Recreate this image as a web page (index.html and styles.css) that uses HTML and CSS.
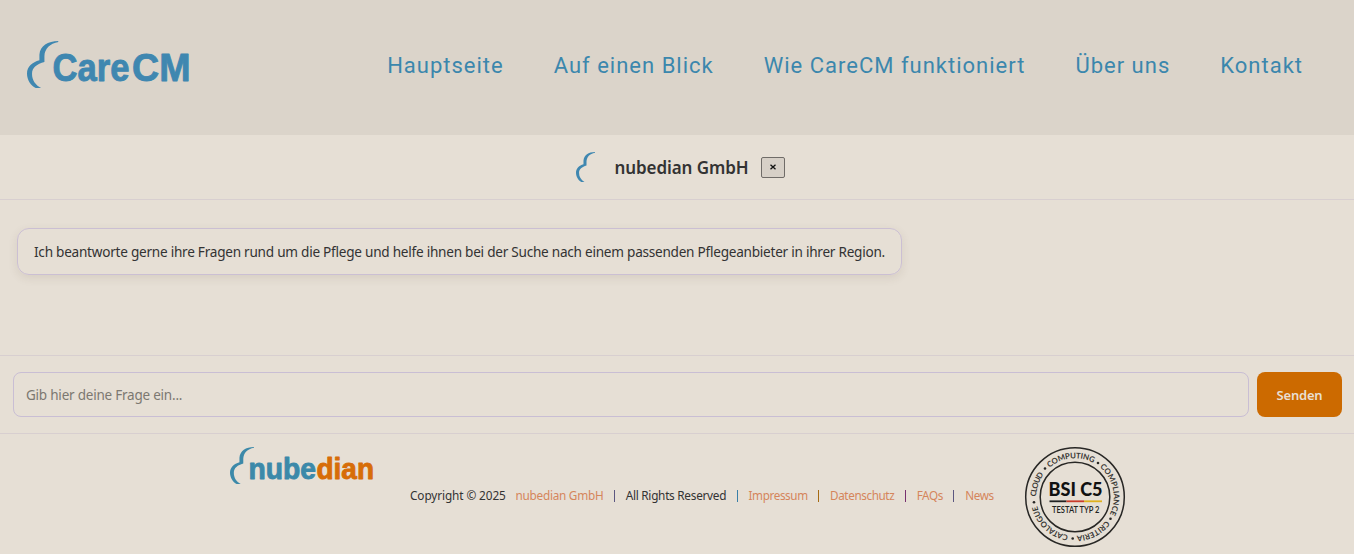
FILE: index.html
```html
<!DOCTYPE html>
<html lang="de">
<head>
<meta charset="utf-8">
<title>CareCM</title>
<link rel="stylesheet" href="styles.css">
</head>
<body>
<svg class="defs" width="0" height="0" aria-hidden="true">
  <symbol id="swoosh" viewBox="36 33 94 141" preserveAspectRatio="none">
    <path d="M130 33C98 33 75 48 73 74L73 91C52 97 36 110 36 131C36 150 48 167 62 174L78 174C61 164 51 151 51 131C51 113 66 102 88 96L88 78C89 56 104 41 130 36Z"/>
  </symbol>
</svg>
<header class="site-header">
  <a class="brand">
    <svg width="166" height="50" viewBox="26 40 166 50">
      <use href="#swoosh" x="27" y="41" width="31.5" height="47"/>
      <text class="logo-text" x="52.500" y="81.300" font-size="38.500" textLength="77" lengthAdjust="spacingAndGlyphs">Care</text>
      <text class="logo-text" x="132" y="81.300" font-size="38.500" textLength="58.500" lengthAdjust="spacingAndGlyphs">CM</text>
    </svg>
  </a>
  <nav class="nav">
    <a>Hauptseite</a><a>Auf einen Blick</a><a>Wie CareCM funktioniert</a><a>Über uns</a><a>Kontakt</a>
  </nav>
</header>
<section class="chat-header">
  <svg class="mini" width="19" height="30"><use href="#swoosh" width="19" height="30"/></svg>
  <h1>nubedian GmbH</h1>
  <button class="close" aria-label="Schließen"><svg width="6" height="6" viewBox="0 0 6 6"><path d="M.5 .7L5.500 5.300M5.500 .7L.5 5.300"/></svg></button>
</section>
<main class="messages">
  <div class="bubble"><span>Ich beantworte gerne ihre Fragen rund um die Pflege und helfe ihnen bei der Suche nach einem passenden Pflegeanbieter in ihrer Region.</span></div>
</main>
<form class="composer">
  <input type="text" placeholder="Gib hier deine Frage ein...">
  <button type="button" class="send">Senden</button>
</form>
<footer class="footer">
  <svg class="footer-logo" width="148" height="40" viewBox="229 446 148 40">
    <use href="#swoosh" x="230" y="447" width="24" height="37"/>
    <text class="logo-text" x="248.500" y="478.500" font-size="29.500" textLength="67.500" lengthAdjust="spacingAndGlyphs">nube</text>
    <text class="logo-text orange" x="316.500" y="478.500" font-size="29.500" textLength="57.500" lengthAdjust="spacingAndGlyphs">dian</text>
  </svg>
  <p class="legal"><span class="copy">Copyright © 2025</span><a class="company">nubedian GmbH</a><i></i><span class="rights">All Rights Reserved</span><i class="blue"></i><a class="link">Impressum</a><i class="amber"></i><a class="link">Datenschutz</a><i class="plum"></i><a class="link">FAQs</a><i></i><a class="link">News</a></p>
  <svg class="badge" width="102" height="102" viewBox="-51 -51 102 102">
    <path id="ring" fill="none" d="M-38.800 0A38.800 38.800 0 0 1 38.800 0A38.800 38.800 0 0 1 -38.800 0"/>
    <circle r="49.300"/><circle r="34.800"/>
    <g class="ring-text">
      <text textLength="24"><textPath href="#ring" startOffset="5.100%">CLOUD</textPath></text>
      <text textLength="47"><textPath href="#ring" startOffset="23.200%">COMPUTING</textPath></text>
      <text textLength="52"><textPath href="#ring" startOffset="46.700%">COMPLIANCE</textPath></text>
      <text textLength="34"><textPath href="#ring" startOffset="67.300%">CRITERIA</textPath></text>
      <text textLength="45"><textPath href="#ring" startOffset="87%">CATALOGUE</textPath></text>
    </g>
    <g class="dots"><circle cx="-30" cy="-28.500" r="1.300"/><circle cx="23" cy="-34" r="1.300"/><circle cx="35.500" cy="21.700" r="1.300"/><circle cx="-2.300" cy="41.500" r="1.300"/><circle cx="-41" cy="5.300" r="1.300"/></g>
    <text class="bsi" x="-26.500" y="-.7" textLength="54" lengthAdjust="spacingAndGlyphs">BSI C5</text>
    <path class="black" d="M-25.500 4.300h17"/><path class="red" d="M-8.500 4.300h17.500"/><path class="gold" d="M9 4.300h18"/>
    <text class="testat" x="-23" y="16" textLength="47.500" lengthAdjust="spacingAndGlyphs">TESTAT TYP 2</text>
  </svg>
</footer>
</body>
</html>
```
FILE: styles.css
```css
* { box-sizing: border-box; }
body { margin: 0; height: 554px; overflow: hidden; display: flex; flex-direction: column; background: #e6dfd5; color: #333; font-family: "Noto Sans", sans-serif; }
.defs { position: absolute; }
.site-header { height: 135px; flex: none; display: flex; justify-content: space-between; align-items: flex-start; background: #dbd4ca; padding: 40px 51px 0 26px; }
.brand svg, .footer-logo, .badge { display: block; flex: none; }
svg use { fill: #3f87b0; }
.logo-text { font-family: "Liberation Sans", Arial, sans-serif; font-weight: 700; fill: #3f87b0; stroke: #3f87b0; stroke-width: .9; stroke-linejoin: round; }
.nav { display: flex; gap: 50px; padding-top: 11px; font: 22px/30px Roboto, sans-serif; letter-spacing: 1px; color: #3b87ad; white-space: nowrap; }
.chat-header { height: 65px; flex: none; display: flex; align-items: center; padding-left: 576px; border-bottom: 1px solid #d8cfd0; }
.chat-header h1 { margin: 2px 0 0 19.500px; width: 146.500px; font-size: 17px; line-height: 24px; font-weight: 600; letter-spacing: -.08px; white-space: nowrap; }
.close { width: 24px; height: 21px; padding: 0; border: 1px solid #706c68; border-radius: 2px; background: #d7d0c7; display: flex; align-items: center; justify-content: center; }
.close path { stroke: #111; stroke-width: 1.3; }
.messages { height: 155px; flex: none; padding: 28px 17px; }
.bubble { width: 885px; height: 47px; border: 1px solid #cbbfd3; border-radius: 12px; padding: 0 16px; font-size: 13.600px; line-height: 46px; white-space: nowrap; box-shadow: 0 3px 10px rgba(80,60,40,.1); letter-spacing: -.25px; }
.composer { height: 79px; flex: none; margin: 0; display: flex; gap: 8px; padding: 16px 12px 16px 13px; border-top: 1px solid #d8cfd0; border-bottom: 1px solid #d8cfd0; }
.composer input { flex: 1; height: 45px; padding: 0 12px; border: 1px solid #c9bed4; border-radius: 8px; background: transparent; font: 13.500px "Noto Sans", sans-serif; letter-spacing: -.22px; }
.composer input::placeholder { color: #7c7871; opacity: 1; }
.send { width: 85px; height: 45px; border: 0; border-radius: 8px; padding: 0; background: #cc6a00; color: #e9dfd2; font: 600 13px "Noto Sans", sans-serif; letter-spacing: -.2px; }
.footer { flex: 1; display: flex; align-items: flex-start; padding: 12px 0 0 229px; }
.footer-logo .logo-text, .footer-logo use { fill: #3c89a9; }
.footer-logo .logo-text { stroke: #3c89a9; }
.footer-logo .orange.logo-text { fill: #d76d08; stroke: #d76d08; }
.legal { flex: none; display: flex; align-items: center; width: 588px; margin: 40px 0 0 33px; font-size: 11.800px; line-height: 18px; letter-spacing: -.27px; white-space: nowrap; }
.legal > * { flex: none; }
.legal .copy { width: 96px; letter-spacing: -.1px; }
.legal a { color: #d5855b; }
.legal .company { margin-left: 9.500px; }
.legal .link { font-size: 11.700px; letter-spacing: -.38px; }
.legal i { width: 1px; height: 12px; margin: 1px 11px 0 10.300px; background: #5c5781; }
.legal .blue { background: #397fa8; }
.legal .amber { background: #a66b13; }
.legal .plum { background: #77316f; }
.badge { margin-left: 26px; }
.badge circle { fill: none; stroke: #282725; stroke-width: 1.5; }
.badge .dots circle { fill: #282725; stroke: none; }
.ring-text { font: 700 7.800px Lato, sans-serif; text-anchor: middle; fill: #383633; }
.bsi { font: 900 18.500px Lato, sans-serif; fill: #111; }
.testat { font: 600 9px Lato, sans-serif; fill: #222; }
.black { stroke: #222; stroke-width: 1.8; }
.red { stroke: #c83b2b; stroke-width: 1.8; }
.gold { stroke: #dfb11e; stroke-width: 1.8; }
```
